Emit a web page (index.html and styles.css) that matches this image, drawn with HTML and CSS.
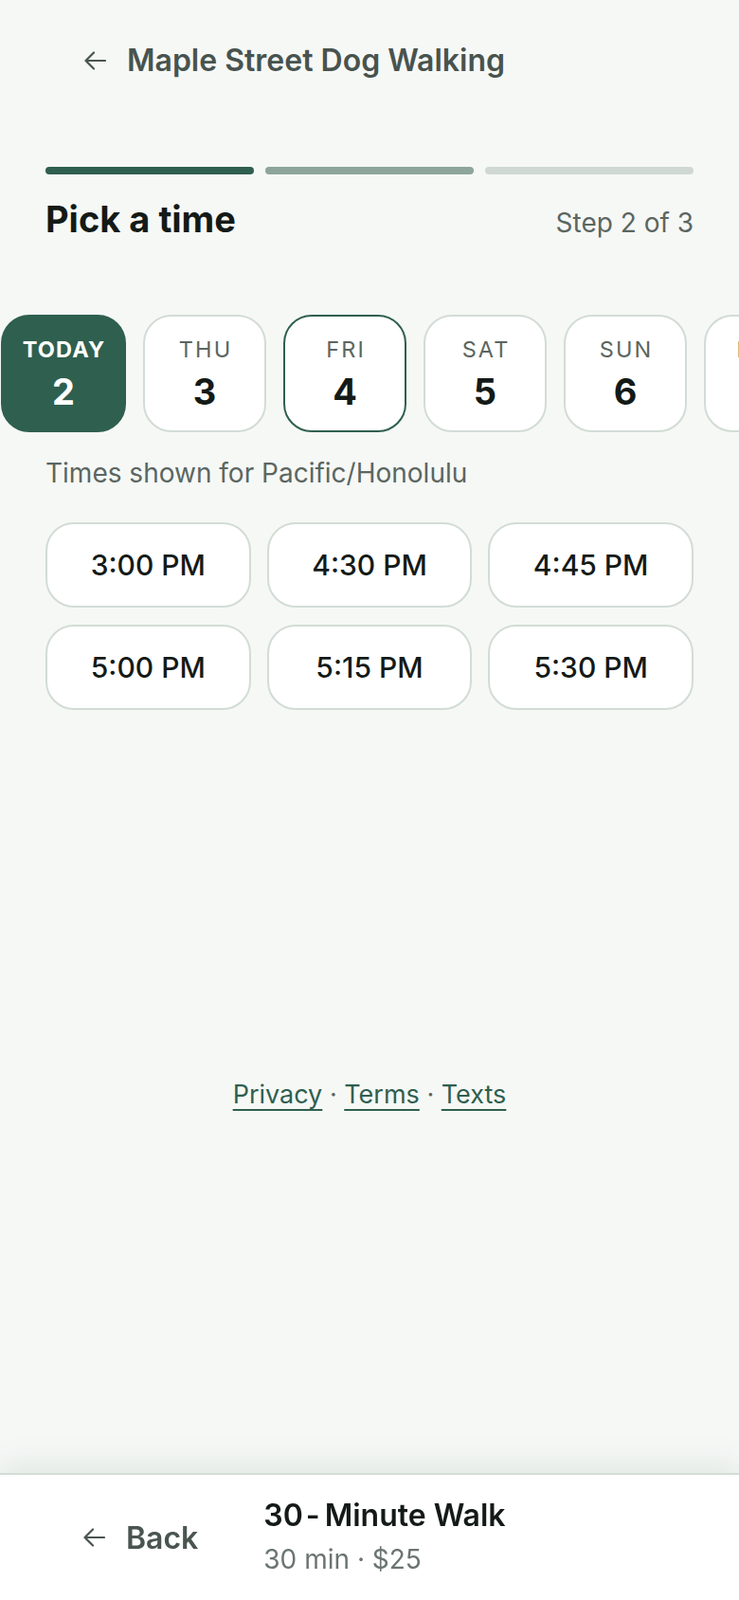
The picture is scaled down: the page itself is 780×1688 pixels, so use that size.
FILE: index.html
```html
<!DOCTYPE html>
<html lang="en">
<head>
    <meta charset="UTF-8">
    <meta name="viewport" content="width=device-width, initial-scale=1.0">
    <title>Maple Street Dog Walking - Pick a time</title>
    <link rel="stylesheet" href="styles.css">
</head>

<body>
    <div class="header">
        <a class="header-back" href="#">
            <svg class="arrow-icon" viewBox="0 0 24 22" width="24" height="22"><path d="M23 11H2.5M11 2.5L2.5 11L11 19.5"/></svg>
        </a>
        <span class="header-title">Maple Street Dog Walking</span>
    </div>

    <div class="steps">
        <div class="step-bar done"></div>
        <div class="step-bar current"></div>
        <div class="step-bar"></div>
    </div>

    <div class="title-row">
        <h1 class="page-title">Pick a time</h1>
        <span class="step-label">Step 2 of 3</span>
    </div>

    <div class="day-strip">
        <div class="day today"><span class="day-name">TODAY</span><span class="day-num">2</span></div>
        <div class="day"><span class="day-name">THU</span><span class="day-num">3</span></div>
        <div class="day selected"><span class="day-name">FRI</span><span class="day-num">4</span></div>
        <div class="day"><span class="day-name">SAT</span><span class="day-num">5</span></div>
        <div class="day"><span class="day-name">SUN</span><span class="day-num">6</span></div>
        <div class="day"><span class="day-name">MON</span><span class="day-num">7</span></div>
        <div class="day"><span class="day-name">TUE</span><span class="day-num">8</span></div>
    </div>

    <div class="tz-note">Times shown for Pacific/Honolulu</div>

    <div class="slots">
        <div class="slot">3:00 PM</div>
        <div class="slot">4:30 PM</div>
        <div class="slot">4:45 PM</div>
        <div class="slot">5:00 PM</div>
        <div class="slot">5:15 PM</div>
        <div class="slot">5:30 PM</div>
    </div>

    <div class="footer">
        <a class="footer-link" href="#">Privacy</a>
        <span class="footer-dot">·</span>
        <a class="footer-link" href="#">Terms</a>
        <span class="footer-dot">·</span>
        <a class="footer-link" href="#">Texts</a>
    </div>

    <div class="bottom-bar">
        <a class="back-btn" href="#">
            <svg class="arrow-icon" viewBox="0 0 24 22" width="24" height="22"><path d="M23 11H2.5M11 2.5L2.5 11L11 19.5"/></svg>
            <span>Back</span>
        </a>
        <div class="service">
            <div class="service-name">30<span class="hyph">-</span>Minute Walk</div>
            <div class="service-meta">30 min · $25</div>
        </div>
    </div>
</body>
</html>
```

FILE: styles.css
```css
body {
    font-family: Inter, "Noto Sans", sans-serif;
    margin: 0;
    color: #141a17;
    background-color: #f6f8f6;
    min-height: 100vh;
    overflow: hidden;
}

a {
    color: inherit;
    text-decoration: none;
}

.arrow-icon {
    fill: none;
    stroke: #4a5550;
    stroke-width: 2.2;
    stroke-linecap: round;
    stroke-linejoin: round;
    display: block;
}

.header {
    display: flex;
    align-items: center;
    gap: 22px;
    padding: 46px 48px 0 88px;
    height: 36px;
}

.header-title {
    font-size: 32px;
    line-height: 36px;
    font-weight: 600;
    color: #48534e;
}

.steps {
    display: flex;
    gap: 12px;
    margin: 94px 48px 0;
}

.step-bar {
    flex: 1;
    height: 8px;
    border-radius: 4px;
    background-color: #cfd9d2;
}

.step-bar.done {
    background-color: #2f5f4f;
}

.step-bar.current {
    background-color: #8da59b;
}

.title-row {
    display: flex;
    align-items: baseline;
    justify-content: space-between;
    margin: 25px 48px 0;
}

.page-title {
    margin: 0;
    font-size: 38px;
    line-height: 1.2;
    font-weight: 700;
    color: #141a17;
}

.step-label {
    font-size: 28px;
    color: #5b6661;
}

.day-strip {
    display: flex;
    gap: 18px;
    margin-top: 77px;
    padding-left: 1px;
    overflow: hidden;
}

.day {
    flex: 0 0 130px;
    height: 124px;
    box-sizing: border-box;
    border: 2px solid #d2dcd6;
    border-radius: 30px;
    background-color: #fff;
    display: flex;
    flex-direction: column;
    align-items: center;
    justify-content: center;
    gap: 10px;
    padding-top: 2px;
}

.day-name {
    font-size: 23.5px;
    line-height: 26px;
    letter-spacing: 0.09em;
    margin-right: -0.09em;
    color: #5b6661;
}

.day-num {
    font-size: 38px;
    line-height: 42px;
    font-weight: 700;
    color: #141a17;
}

.day.today {
    flex-basis: 132px;
    background-color: #2f5f4f;
    border-color: #2f5f4f;
}

.day.today .day-name {
    font-weight: 700;
    letter-spacing: 0.05em;
    margin-right: -0.05em;
    color: #fff;
}

.day.today .day-num {
    color: #fff;
}

.day.selected {
    border-color: #2f5f4f;
}

.tz-note {
    margin: 26px 48px 0;
    font-size: 28px;
    line-height: 1.25;
    color: #5b6661;
}

.slots {
    display: grid;
    grid-template-columns: repeat(3, 1fr);
    gap: 18px 17px;
    margin: 34px 48px 0;
}

.slot {
    height: 90px;
    box-sizing: border-box;
    border: 2px solid #d2dcd6;
    border-radius: 30px;
    background-color: #fff;
    display: flex;
    align-items: center;
    justify-content: center;
    font-size: 30px;
    font-weight: 500;
    color: #141a17;
}

.footer {
    margin-top: 386px;
    text-align: center;
    font-size: 27px;
    line-height: 40px;
    color: #5b6661;
}

.footer-link {
    color: #2f5f4f;
    text-decoration: underline;
    text-decoration-thickness: 2px;
    text-underline-offset: 6px;
}

.bottom-bar {
    position: fixed;
    left: 0;
    right: 0;
    bottom: 0;
    height: 132px;
    background-color: #fff;
    border-top: 2px solid #d3ddd7;
    box-shadow: 0 -10px 30px rgba(47, 95, 79, 0.10);
    display: flex;
    align-items: center;
    padding-left: 87px;
}

.back-btn {
    display: flex;
    align-items: center;
    gap: 22px;
    font-size: 32px;
    font-weight: 600;
    color: #4a5550;
}

.service {
    margin-left: 69px;
}

.service-name {
    font-size: 32px;
    line-height: 36px;
    font-weight: 600;
    color: #141a17;
}

.hyph {
    margin: 0 5px 0 3px;
}

.service-meta {
    margin-top: 10px;
    font-size: 28px;
    line-height: 1.3;
    color: #6b7570;
}
```
